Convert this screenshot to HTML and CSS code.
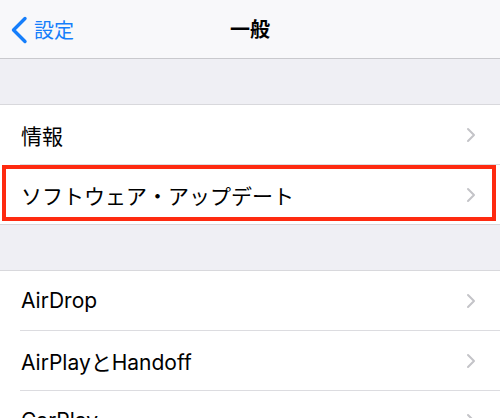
FILE: index.html
```html
<!doctype html>
<html lang="ja">
  <head>
    <meta charset="UTF-8" />
    <meta name="viewport" content="width=device-width, initial-scale=1.0" />
    <title>一般</title>
    <link rel="stylesheet" href="styles.css">
  </head>
  <body>
    <div class="navbar">
      <a class="back" href="#">
        <svg width="18" height="28" viewBox="0 0 18 28">
          <path d="M15 2.5 L3.5 14 L15 25.5" fill="none" stroke="#157efb" stroke-width="3.4" stroke-linecap="round" stroke-linejoin="round"/>
        </svg>
        <span>設定</span>
      </a>
      <div class="title">一般</div>
    </div>

    <div class="spacer"></div>
    <div class="group">
      <div class="row">
        <span class="label">情報</span>
        <svg class="chev" width="10" height="16" viewBox="0 0 10 16"><path d="M2 2 L8 8 L2 14" fill="none" stroke="#c4c4c8" stroke-width="2" stroke-linecap="round" stroke-linejoin="round"/></svg>
      </div>
      <div class="row highlight">
        <span class="label">ソフトウェア・アップデート</span>
        <svg class="chev" width="10" height="16" viewBox="0 0 10 16"><path d="M2 2 L8 8 L2 14" fill="none" stroke="#c4c4c8" stroke-width="2" stroke-linecap="round" stroke-linejoin="round"/></svg>
        <div class="mark"></div>
      </div>
    </div>

    <div class="spacer"></div>
    <div class="group">
      <div class="row">
        <span class="label">AirDrop</span>
        <svg class="chev" width="10" height="16" viewBox="0 0 10 16"><path d="M2 2 L8 8 L2 14" fill="none" stroke="#c4c4c8" stroke-width="2" stroke-linecap="round" stroke-linejoin="round"/></svg>
      </div>
      <div class="row">
        <span class="label">AirPlayとHandoff</span>
        <svg class="chev" width="10" height="16" viewBox="0 0 10 16"><path d="M2 2 L8 8 L2 14" fill="none" stroke="#c4c4c8" stroke-width="2" stroke-linecap="round" stroke-linejoin="round"/></svg>
      </div>
      <div class="row">
        <span class="label">CarPlay</span>
        <svg class="chev" width="10" height="16" viewBox="0 0 10 16"><path d="M2 2 L8 8 L2 14" fill="none" stroke="#c4c4c8" stroke-width="2" stroke-linecap="round" stroke-linejoin="round"/></svg>
      </div>
    </div>
  </body>
</html>
```

FILE: styles.css
```css
body {
  margin: 0;
  background: #efeff4;
  font-family: Inter, "Noto Sans CJK JP", sans-serif;
  color: #000;
  overflow: hidden;
}
.navbar {
  height: 58px;
  background: #f8f8fa;
  border-bottom: 1px solid #c9c9cd;
  display: flex;
  align-items: center;
  justify-content: center;
  position: relative;
}
.back {
  position: absolute;
  left: 10px;
  top: 15px;
  display: flex;
  align-items: center;
  gap: 6px;
  color: #157efb;
  text-decoration: none;
  font-size: 20px;
}
.title {
  font-size: 20px;
  font-weight: bold;
  padding-bottom: 1px;
}
.spacer {
  height: 45px;
}
.group {
  background: #fff;
  border-top: 1px solid #d8d8dc;
  border-bottom: 1px solid #d8d8dc;
  padding-left: 20px;
}
.row {
  height: 60px;
  box-sizing: border-box;
  display: flex;
  align-items: center;
  justify-content: space-between;
  padding-right: 24px;
  border-bottom: 1px solid #dcdce0;
  position: relative;
}
.row:last-child {
  border-bottom: none;
  height: 59px;
}
.label {
  font-size: 21px;
  padding-left: 1px;
}
.mark {
  position: absolute;
  top: 0;
  left: -18px;
  right: 4px;
  bottom: 3px;
  border: 4px solid #fe2a10;
}
```
